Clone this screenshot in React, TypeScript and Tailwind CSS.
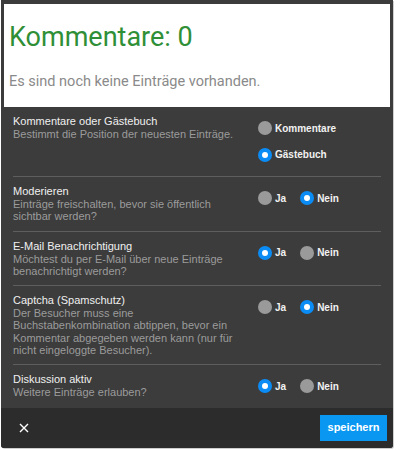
import React from "react";

type Opt = { label: string; checked: boolean };
type Row = { title: string; desc: string[]; options: Opt[]; stacked?: boolean };

const rows: Row[] = [
  {
    title: "Kommentare oder Gästebuch",
    desc: ["Bestimmt die Position der neuesten Einträge."],
    options: [
      { label: "Kommentare", checked: false },
      { label: "Gästebuch", checked: true },
    ],
    stacked: true,
  },
  {
    title: "Moderieren",
    desc: ["Einträge freischalten, bevor sie öffentlich", "sichtbar werden?"],
    options: [
      { label: "Ja", checked: false },
      { label: "Nein", checked: true },
    ],
  },
  {
    title: "E-Mail Benachrichtigung",
    desc: ["Möchtest du per E-Mail über neue Einträge", "benachrichtigt werden?"],
    options: [
      { label: "Ja", checked: true },
      { label: "Nein", checked: false },
    ],
  },
  {
    title: "Captcha (Spamschutz)",
    desc: [
      "Der Besucher muss eine",
      "Buchstabenkombination abtippen, bevor ein",
      "Kommentar abgegeben werden kann (nur für",
      "nicht eingeloggte Besucher).",
    ],
    options: [
      { label: "Ja", checked: false },
      { label: "Nein", checked: true },
    ],
  },
  {
    title: "Diskussion aktiv",
    desc: ["Weitere Einträge erlauben?"],
    options: [
      { label: "Ja", checked: true },
      { label: "Nein", checked: false },
    ],
  },
];

function Radio({ checked }: { checked: boolean }) {
  return checked ? (
    <span className="flex h-[14px] w-[14px] shrink-0 items-center justify-center rounded-full bg-[#0b8cf5]">
      <span className="h-[6px] w-[6px] rounded-full bg-white" />
    </span>
  ) : (
    <span className="h-[14px] w-[14px] shrink-0 rounded-full bg-[#9a9a9a]" />
  );
}

function Option({ o }: { o: Opt }) {
  return (
    <div className="flex h-[26.5px] items-center gap-[3px]">
      <Radio checked={o.checked} />
      <span className="text-[10px] font-bold text-[#f2f2f2]">{o.label}</span>
    </div>
  );
}

export default function App() {
  return (
    <div className="h-[450px] w-[400px] bg-white">
      <div className="ml-px w-[392px] overflow-hidden rounded-b-[3px] bg-[#3c3c3c] shadow-[1px_1px_0_#cfcfcf]">
        <div className="px-[3px] pt-[4px]">
          <div className="h-[103px] bg-white pl-[5px] pt-[17px] font-['Roboto',sans-serif]">
            <div className="text-[27px] leading-[32px] text-[#2f8f37]">Kommentare: 0</div>
            <div className="mt-[20px] text-[14.5px] leading-[18px] text-[#8a8a8a]">
              Es sind noch keine Einträge vorhanden.
            </div>
          </div>
        </div>
        <div className="px-[12px] font-['Liberation_Sans',Arial,sans-serif]">
          {rows.map((r, i) => (
            <div
              key={i}
              className={
                "flex py-[8px] " +
                (i < rows.length - 1 ? "border-b border-[#5e5e5e]" : "")
              }
            >
              <div className="w-[245px] shrink-0">
                <div className="text-[11px] leading-[13px] text-[#f0f0f0]">{r.title}</div>
                {r.desc.map((d, j) => (
                  <div key={j} className="text-[11px] leading-[12.25px] text-[#9b9b9b]">
                    {d}
                  </div>
                ))}
              </div>
              <div className={r.stacked ? "flex flex-col" : "flex gap-[14px]"}>
                {r.options.map((o, j) => (
                  <Option key={j} o={o} />
                ))}
              </div>
            </div>
          ))}
        </div>
        <div className="flex h-[40px] items-center justify-between bg-[#2c2c2c] pl-[18px] pr-[6px] font-['Liberation_Sans',Arial,sans-serif]">
          <svg width="10" height="10" viewBox="0 0 10 10" className="text-white">
            <path d="M1 1 L9 9 M9 1 L1 9" stroke="currentColor" strokeWidth="1.4" />
          </svg>
          <button className="h-[26px] w-[67px] bg-[#0a97f2] text-[11px] font-bold text-white">
            speichern
          </button>
        </div>
      </div>
    </div>
  );
}
